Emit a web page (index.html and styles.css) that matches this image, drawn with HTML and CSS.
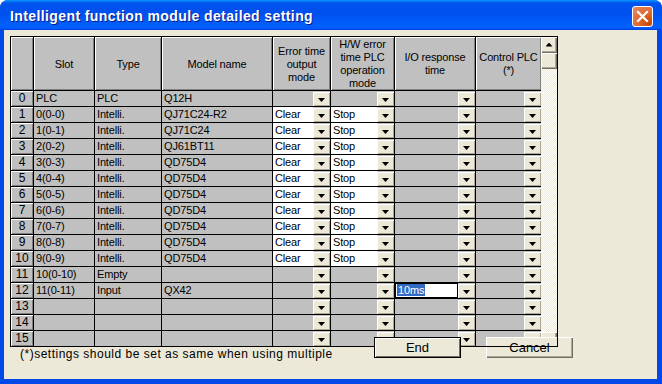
FILE: index.html
```html
<!DOCTYPE html>
<html lang="en">

<head>
    <meta charset="UTF-8">
    <title>Intelligent function module detailed setting</title>
    <link rel="stylesheet" href="styles.css">
</head>

<body>
    <div class="window">
        <div class="titlebar">
            <span class="title">Intelligent function module detailed setting</span>
            <span class="close">
                <svg width="13" height="13" viewBox="0 0 13 13">
                    <path d="M2 2 L11 11 M11 2 L2 11" stroke="#fff" stroke-width="2.2" stroke-linecap="square" />
                </svg>
            </span>
        </div>
        <div class="content">
            <div class="frame">
                <div class="grid" id="grid">
                    <div class="head"></div>
                    <div class="head">Slot</div>
                    <div class="head">Type</div>
                    <div class="head">Model name</div>
                    <div class="head">Error time<br>output<br>mode</div>
                    <div class="head">H/W error<br>time PLC<br>operation<br>mode</div>
                    <div class="head">I/O response<br>time</div>
                    <div class="head">Control PLC<br>(*)</div>
                </div>
                <div class="scrollbar">
                    <div class="sb-btn up"></div>
                    <div class="sb-thumb"></div>
                    <div class="sb-track"></div>
                    <div class="sb-btn down"></div>
                </div>
            </div>
            <p class="note">(*)settings should be set as same when using multiple</p>
            <button class="btn end">End</button>
            <button class="btn cancel">Cancel</button>
        </div>
    </div>
    <script>
        // slot, type, model, error time, h/w error, i/o response
        let rows = [
            ["PLC", "PLC", "Q12H", "", "", ""],
            ["0(0-0)", "Intelli.", "QJ71C24-R2", "Clear", "Stop", ""],
            ["1(0-1)", "Intelli.", "QJ71C24", "Clear", "Stop", ""],
            ["2(0-2)", "Intelli.", "QJ61BT11", "Clear", "Stop", ""],
            ["3(0-3)", "Intelli.", "QD75D4", "Clear", "Stop", ""],
            ["4(0-4)", "Intelli.", "QD75D4", "Clear", "Stop", ""],
            ["5(0-5)", "Intelli.", "QD75D4", "Clear", "Stop", ""],
            ["6(0-6)", "Intelli.", "QD75D4", "Clear", "Stop", ""],
            ["7(0-7)", "Intelli.", "QD75D4", "Clear", "Stop", ""],
            ["8(0-8)", "Intelli.", "QD75D4", "Clear", "Stop", ""],
            ["9(0-9)", "Intelli.", "QD75D4", "Clear", "Stop", ""],
            ["10(0-10)", "Empty", "", "", "", ""],
            ["11(0-11)", "Input", "QX42", "", "", "edit"],
            ["", "", "", "", "", ""],
            ["", "", "", "", "", ""],
            ["", "", "", "", "", ""]
        ]

        let grid = document.getElementById("grid")

        function cell(cls, text) {
            let div = document.createElement("div")
            div.className = cls
            div.textContent = text
            grid.appendChild(div)
            return div
        }

        function combo(value) {
            let div = cell("cell combo", "")
            let val = document.createElement("span")
            val.className = value ? "val filled" : "val"
            if (value == "edit") {
                val.className = "val edit"
                let sel = document.createElement("span")
                sel.className = "selected"
                sel.textContent = "10ms"
                val.appendChild(sel)
            } else {
                val.textContent = value
            }
            let drop = document.createElement("span")
            drop.className = "drop"
            div.appendChild(val)
            div.appendChild(drop)
        }

        rows.forEach(function (row, i) {
            cell("rownum", i)
            cell("cell", row[0])
            cell("cell", row[1])
            cell("cell", row[2])
            combo(row[3])
            combo(row[4])
            combo(row[5])
            combo("")
        })
    </script>
</body>

</html>
```

FILE: styles.css
```css
body {
    margin: 0;
    padding: 0;
    font-family: "Liberation Sans", Arial, sans-serif;
    font-size: 12px;
    color: rgb(0, 0, 0);
}

.window {
    width: 662px;
    height: 384px;
    box-sizing: border-box;
    display: flex;
    flex-direction: column;
    background: rgb(0, 72, 232);
    border-radius: 8px 8px 0 0;
    overflow: hidden;
}

.titlebar {
    height: 30px;
    flex-shrink: 0;
    display: flex;
    align-items: center;
    justify-content: space-between;
    padding: 0 9px 0 10px;
    background: linear-gradient(180deg, rgb(9, 151, 255), rgb(0, 83, 238) 10%, rgb(0, 80, 238) 45%, rgb(0, 96, 252) 85%, rgb(0, 91, 255) 94%, rgb(0, 61, 215));
}

.title {
    color: rgb(255, 255, 255);
    font-weight: bold;
    font-size: 14px;
    letter-spacing: 0.4px;
    text-shadow: 1px 1px rgb(10, 24, 131);
    margin-top: 2px;
}

.close {
    width: 19px;
    height: 19px;
    margin-top: 3px;
    border: 1px solid rgb(255, 255, 255);
    border-radius: 3px;
    display: flex;
    align-items: center;
    justify-content: center;
    background: radial-gradient(circle at 85% 85%, rgb(204, 70, 0), rgb(220, 101, 39) 40%, rgb(235, 136, 104));
}

.content {
    position: relative;
    flex: 1;
    margin: 0 5px 5px 4px;
    padding: 6px 0 0 6px;
    background: rgb(236, 233, 216);
}

.frame {
    position: relative;
    display: flex;
    width: fit-content;
    padding: 1px;
}

/* the outer line of the grid is drawn over the Cancel button */
.frame::after {
    content: "";
    position: absolute;
    inset: 0;
    border: 1px solid rgb(0, 0, 0);
    z-index: 3;
    pointer-events: none;
}

.grid {
    display: grid;
    grid-template-columns: 22px 60px 66px 110px 57px 63px 80px 65px;
    grid-template-rows: 53px repeat(16, 15px);
    gap: 1px;
    background: rgb(0, 0, 0);
    font-size: 11px;
    letter-spacing: -0.15px;
}

.head,
.rownum {
    background: rgb(192, 192, 192);
    box-shadow: inset 1px 1px rgb(255, 255, 255), inset -1px -1px rgb(128, 128, 128);
    display: flex;
    align-items: center;
    justify-content: center;
    text-align: center;
    line-height: 13px;
}

.head {
    padding-top: 1px;
}

.rownum {
    line-height: 15px;
    font-size: 12px;
    letter-spacing: 0;
}

.cell {
    background: rgb(192, 192, 192);
    padding-left: 2px;
    line-height: 15px;
    white-space: nowrap;
    overflow: hidden;
}

.combo {
    display: flex;
    padding-left: 0;
}

.val {
    flex: 1;
    padding-left: 2px;
}

.val.filled {
    background: rgb(255, 255, 255);
}

.val.edit {
    background: rgb(255, 255, 255);
    box-shadow: inset 0 0 0 1px rgb(0, 0, 0);
    padding-left: 2px;
}

.selected {
    background: rgb(49, 106, 197);
    color: rgb(255, 255, 255);
    padding: 0 1px;
}

.drop {
    width: 17px;
    height: 14px;
    margin-top: 1px;
    flex-shrink: 0;
    background: rgb(236, 233, 216);
    box-shadow: inset 1px 1px rgb(255, 255, 255), inset -1px -1px rgb(172, 168, 153);
    display: flex;
    align-items: center;
    justify-content: center;
}

.drop::before {
    content: "";
    width: 7px;
    height: 4px;
    margin-top: 2px;
    background: rgb(0, 0, 0);
    clip-path: polygon(0 0, 100% 0, 50% 100%);
}

.scrollbar {
    width: 16px;
    display: flex;
    flex-direction: column;
    background: repeating-conic-gradient(rgb(236, 233, 216) 0 25%, rgb(255, 255, 255) 0 50%) 0 0 / 2px 2px;
}

.sb-btn,
.sb-thumb {
    height: 16px;
    background: rgb(236, 233, 216);
    box-shadow: inset 1px 1px rgb(255, 255, 255), inset -1px -1px rgb(113, 111, 100), inset -2px -2px rgb(172, 168, 153);
    display: flex;
    align-items: center;
    justify-content: center;
}

.sb-btn.up::before {
    content: "";
    width: 7px;
    height: 4px;
    margin-bottom: 1px;
    background: rgb(0, 0, 0);
    clip-path: polygon(50% 0, 100% 100%, 0 100%);
}

.sb-track {
    flex: 1;
}

.sb-btn.down {
    height: 14px;
}

.note {
    margin: 0 0 0 10px;
    width: 314px;
    white-space: nowrap;
    overflow: hidden;
    font-size: 12px;
    letter-spacing: 0.5px;
    line-height: 14px;
}

.btn {
    position: absolute;
    top: 307px;
    width: 87px;
    height: 21px;
    padding: 0;
    font-family: "Liberation Sans", Arial, sans-serif;
    font-size: 13px;
    color: rgb(0, 0, 0);
    background: rgb(236, 233, 216);
    border: none;
    box-shadow: inset 1px 1px rgb(255, 255, 255), inset -1px -1px rgb(113, 111, 100), inset -2px -2px rgb(172, 168, 153);
}

.btn.end {
    left: 370px;
    z-index: 4;
    box-shadow: inset 0 0 0 1px rgb(0, 0, 0), inset 2px 2px rgb(255, 255, 255), inset -2px -2px rgb(113, 111, 100);
}

.btn.cancel {
    left: 482px;
    z-index: 2;
}
```
